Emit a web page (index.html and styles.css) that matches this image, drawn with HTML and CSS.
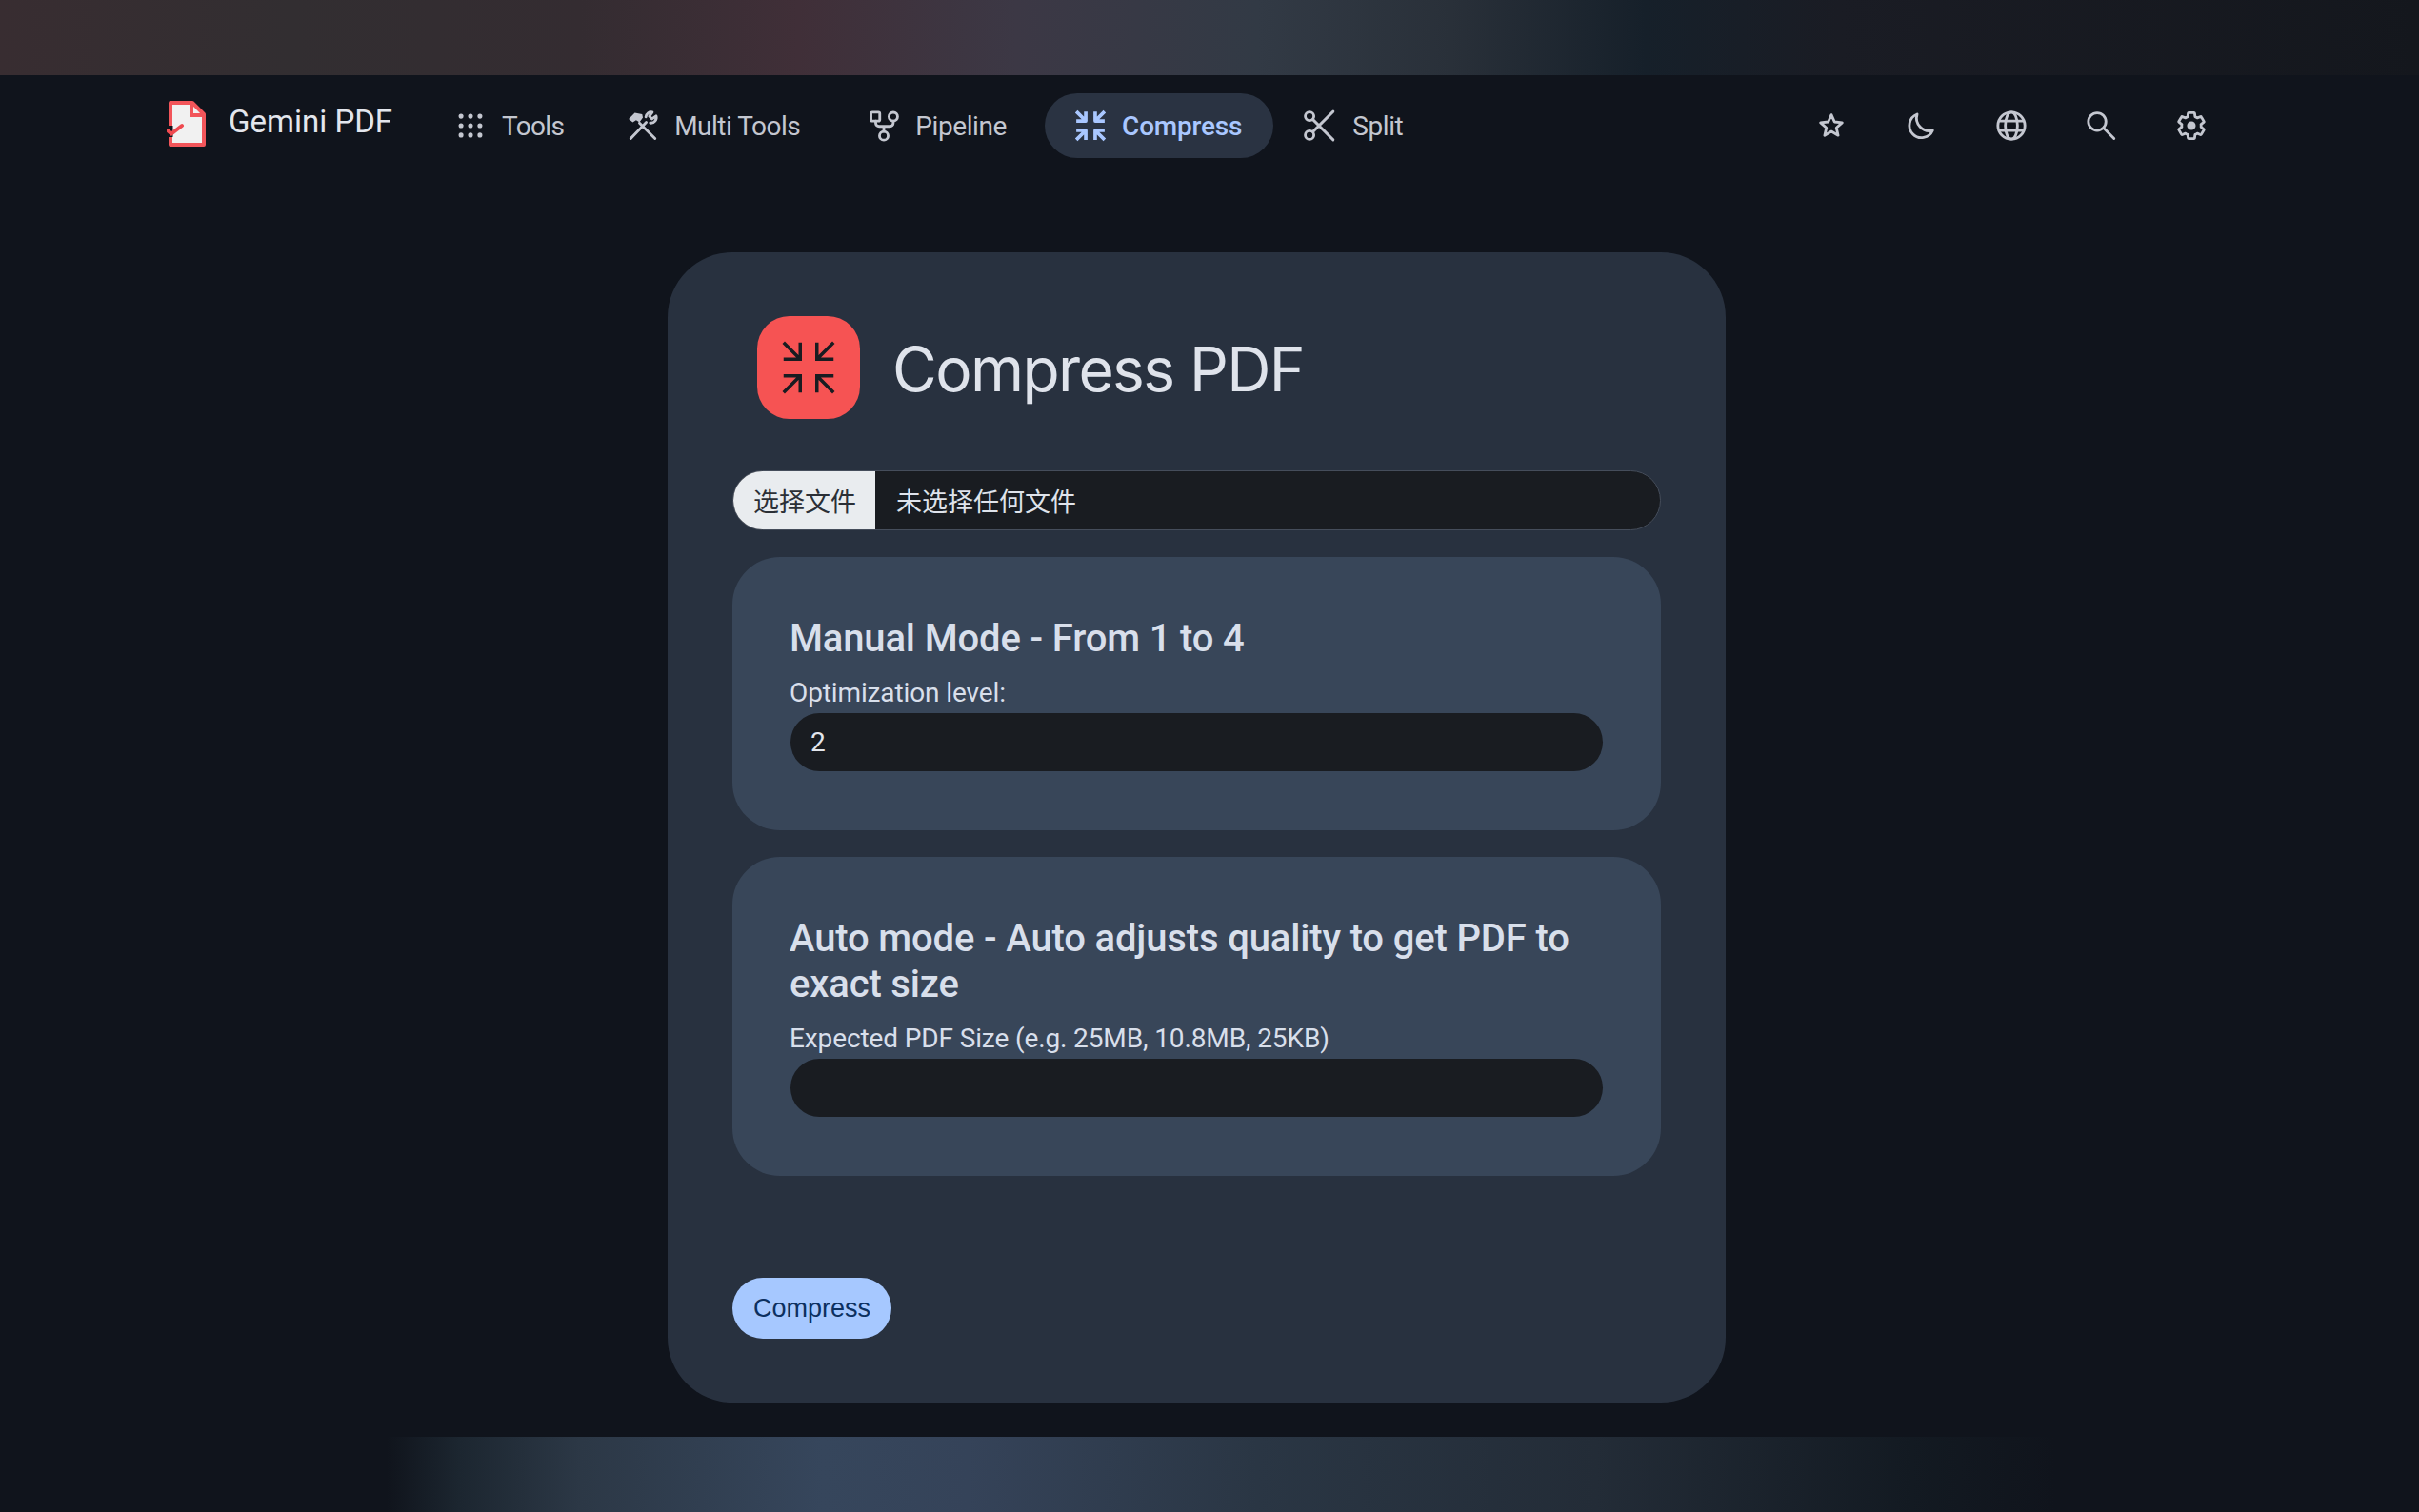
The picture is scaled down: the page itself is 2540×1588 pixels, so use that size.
FILE: index.html
```html
<!DOCTYPE html>
<html lang="en">
<head>
    <meta charset="UTF-8">
    <meta name="viewport" content="width=device-width, initial-scale=1.0">
    <title>Compress PDF</title>
    <link rel="stylesheet" href="styles.css">
</head>
<body>
    <svg class="defs" width="0" height="0" aria-hidden="true">
        <symbol id="arrows-in" viewBox="0 0 24 24">
            <path d="M1.5 1.5L8.5 8.5M1.5 8.5H8.5V1.5M22.5 1.5L15.5 8.5M22.5 8.5H15.5V1.5M1.5 22.5L8.5 15.5M1.5 15.5H8.5V22.5M22.5 22.5L15.5 15.5M22.5 15.5H15.5V22.5"/>
        </symbol>
    </svg>

    <div class="strip strip-top"></div>

    <nav class="navbar">
        <a class="brand" href="#">
            <svg class="brand-icon" viewBox="0 0 42 50">
                <path class="doc" d="M4 3H27L39 15V47H4Z"/>
                <path class="doc-fold" d="M26 4V16H38"/>
                <path class="doc-gap" d="M4 27V39"/>
                <path class="doc-check" d="M1 32L5 35.5L16 27"/>
            </svg>
            <span>Gemini PDF</span>
        </a>
        <ul class="nav-links">
            <li class="nav-item tools">
                <svg class="icon" viewBox="0 0 24 24">
                    <g class="dots"><circle cx="5" cy="5" r="1.8"/><circle cx="12" cy="5" r="1.8"/><circle cx="19" cy="5" r="1.8"/><circle cx="5" cy="12" r="1.8"/><circle cx="12" cy="12" r="1.8"/><circle cx="19" cy="12" r="1.8"/><circle cx="5" cy="19" r="1.8"/><circle cx="12" cy="19" r="1.8"/><circle cx="19" cy="19" r="1.8"/></g>
                </svg>
                <span>Tools</span>
            </li>
            <li class="nav-item multi">
                <svg class="icon" viewBox="0 0 24 24">
                    <path d="M3 21.5L14.5 9.5M14.2 5.5A4 4 0 0 1 19 2L16.8 5L18.8 7L21.8 4.8A4 4 0 0 1 17.5 10"/>
                    <path d="M21 21.5L9.5 10"/>
                    <path class="solid" d="M1.5 7L6 2.5L11.5 3.5L12 6L9.5 9.5L7 8L4.5 9.5Z"/>
                </svg>
                <span>Multi Tools</span>
            </li>
            <li class="nav-item pipeline">
                <svg class="icon" viewBox="0 0 24 24">
                    <rect x="2.5" y="2" width="6.5" height="6.5" rx="1"/>
                    <circle cx="19" cy="5.3" r="3.2"/>
                    <circle cx="12" cy="19.5" r="3.2"/>
                    <path d="M6 8.5V10A2.5 2.5 0 0 0 8.5 12.5H16.5A2.5 2.5 0 0 0 19 10V8.5M12 12.5V16.3"/>
                </svg>
                <span>Pipeline</span>
            </li>
            <li class="nav-item compress active">
                <svg class="icon arrows"><use href="#arrows-in"/></svg>
                <span>Compress</span>
            </li>
            <li class="nav-item split">
                <svg class="icon" viewBox="0 0 24 24">
                    <circle cx="5" cy="5" r="3.2"/>
                    <circle cx="5" cy="19" r="3.2"/>
                    <path d="M7.5 7.5L22.5 22.5M7.5 16.5L22.5 1.5"/>
                </svg>
                <span>Split</span>
            </li>
        </ul>
        <div class="nav-actions">
            <svg class="icon" viewBox="0 0 24 24"><path d="M12 4L14.3 9.2L20 9.8L15.7 13.6L17 19.2L12 16.3L7 19.2L8.3 13.6L4 9.8L9.7 9.2Z"/></svg>
            <svg class="icon" viewBox="0 0 24 24"><path d="M8.5 3.5A9 9 0 1 0 20 15.5A9.5 9.5 0 0 1 8.5 3.5Z"/></svg>
            <svg class="icon" viewBox="0 0 24 24"><circle cx="12" cy="12" r="10"/><ellipse cx="12" cy="12" rx="4.5" ry="10"/><path d="M3 8.5H21M3 15.5H21"/></svg>
            <svg class="icon" viewBox="0 0 24 24"><circle cx="8.5" cy="9" r="6.5"/><path d="M13.5 14L21 21.5"/></svg>
            <svg class="icon" viewBox="0 0 24 24">
                <path d="M19.14 12.94c.04-.3.06-.61.06-.94 0-.32-.02-.64-.07-.94l2.03-1.58c.18-.14.23-.41.12-.61l-1.92-3.32c-.12-.22-.37-.29-.59-.22l-2.39.96c-.5-.38-1.03-.7-1.62-.94l-.36-2.54c-.04-.24-.24-.41-.48-.41h-3.84c-.24 0-.43.17-.47.41l-.36 2.54c-.59.24-1.13.57-1.62.94l-2.39-.96c-.22-.08-.47 0-.59.22L2.74 8.87c-.12.21-.08.47.12.61l2.03 1.58c-.05.3-.09.63-.09.94s.02.64.07.94l-2.03 1.58c-.18.14-.23.41-.12.61l1.92 3.32c.12.22.37.29.59.22l2.39-.96c.5.38 1.03.7 1.62.94l.36 2.54c.05.24.24.41.48.41h3.84c.24 0 .44-.17.47-.41l.36-2.54c.59-.24 1.13-.56 1.62-.94l2.39.96c.22.08.47 0 .59-.22l1.92-3.32c.12-.22.07-.47-.12-.61l-2.01-1.58z"/>
                <circle class="solid" cx="12" cy="12" r="3.2"/>
            </svg>
        </div>
    </nav>

    <main class="content">
        <div class="card">
            <div class="card-header">
                <div class="tool-icon">
                    <svg class="arrows"><use href="#arrows-in"/></svg>
                </div>
                <h1>Compress PDF</h1>
            </div>
            <div class="file-input">
                <span class="file-button">选择文件</span>
                <span class="file-name">未选择任何文件</span>
            </div>
            <section class="mode">
                <h2>Manual Mode - From 1 to 4</h2>
                <label for="level">Optimization level:</label>
                <input id="level" type="text" value="2">
            </section>
            <section class="mode">
                <h2>Auto mode - Auto adjusts quality to get PDF to exact size</h2>
                <label for="size">Expected PDF Size (e.g. 25MB, 10.8MB, 25KB)</label>
                <input id="size" type="text">
            </section>
            <button type="button" class="submit">Compress</button>
        </div>
    </main>

    <div class="strip strip-bottom"></div>
</body>
</html>
```

FILE: styles.css
```css
* {
    box-sizing: border-box;
}
html, body {
    height: 100%;
}
body {
    margin: 0;
    height: 1588px;
    overflow: hidden;
    display: flex;
    flex-direction: column;
    background-color: #10141c;
    color: #dfe3eb;
    font-family: 'Roboto', sans-serif;
}
.defs {
    position: absolute;
}
.strip {
    flex: none;
}
.strip-top {
    height: 79px;
    background: linear-gradient(90deg, #382d31 0%, #322e31 12%, #342c31 24%, #402f38 33%, #3c3845 42%, #323a45 52%, #293039 60%, #16202a 68%, #1a1c24 76%, #14171d 100%);
}
.strip-bottom {
    height: 79px;
    margin-top: 36px;
    background: linear-gradient(90deg, #10141c 16%, #1c2630 19%, #2c3846 24%, #36465c 34%, #354359 40%, #2a3644 52%, #232c37 66%, #131a22 79%, #10141c 85%);
}

/* navbar */
.navbar {
    flex: none;
    height: 106px;
    padding: 0 222px 0 175px;
    display: flex;
    align-items: center;
    color: #c4c7d0;
}
.brand {
    display: flex;
    align-items: center;
    gap: 23px;
    margin-right: 34px;
    margin-top: -4px;
    color: #e3e6ed;
    font-size: 33px;
    text-decoration: none;
}
.brand span {
    margin-bottom: 5px;
}
.brand-icon {
    width: 42px;
    height: 50px;
}
.doc {
    fill: #f1f1f1;
    stroke: #f2555a;
    stroke-width: 4;
    stroke-linejoin: round;
}
.doc-fold {
    fill: none;
    stroke: #f2555a;
    stroke-width: 4;
}
.doc-gap {
    fill: none;
    stroke: #10141c;
    stroke-width: 5;
}
.doc-check {
    fill: none;
    stroke: #ef4a50;
    stroke-width: 4;
    stroke-linecap: round;
}
.nav-links {
    display: flex;
    align-items: center;
    gap: 5px;
    margin: 0;
    padding: 0;
    list-style: none;
    font-size: 28px;
    letter-spacing: -0.4px;
}
.nav-item {
    display: flex;
    align-items: center;
    gap: 16px;
    height: 68px;
    padding: 0 31px;
}
.nav-item.tools {
    letter-spacing: -0.7px;
}
.nav-item.multi {
    margin-left: -1px;
    letter-spacing: -0.5px;
}
.nav-item.compress {
    padding-right: 33px;
    border-radius: 34px;
    letter-spacing: -0.2px;
}
.nav-item.active {
    background-color: #2a3342;
    color: #a9c7ff;
    font-weight: 500;
}
.nav-item.pipeline {
    margin-left: 4px;
    margin-right: 4px;
}
.nav-item.split {
    gap: 18px;
    margin-left: -5px;
}
.icon {
    flex: none;
    width: 34px;
    height: 34px;
    fill: none;
    stroke: currentColor;
    stroke-width: 2;
    stroke-linecap: round;
    stroke-linejoin: round;
}
.icon .dots,
.icon .solid {
    fill: currentColor;
    stroke: none;
}
.arrows {
    fill: none;
    stroke: currentColor;
}
.nav-item .arrows {
    stroke-width: 2.6;
    stroke-linecap: butt;
}
.nav-actions {
    margin-left: auto;
    display: flex;
    align-items: center;
    gap: 60.4px;
}

/* main card */
.content {
    flex: 1;
    padding: 80px 27px 0 0;
    display: flex;
    justify-content: center;
}
.card {
    width: 1111px;
    height: 1208px;
    padding: 67px 68px;
    border-radius: 68px;
    background-color: #28313f;
    display: flex;
    flex-direction: column;
}
.card-header {
    display: flex;
    align-items: center;
    gap: 34px;
    padding-left: 26px;
    margin-bottom: 54px;
}
.tool-icon {
    width: 108px;
    height: 108px;
    border-radius: 34px;
    background-color: #f65353;
    color: #191c21;
    display: flex;
    align-items: center;
    justify-content: center;
}
.tool-icon .arrows {
    width: 60px;
    height: 60px;
    stroke-width: 1.4;
}
h1 {
    margin: 0;
    position: relative;
    top: 1px;
    font-family: 'Inter', sans-serif;
    font-size: 64px;
    font-weight: 400;
    letter-spacing: -1.6px;
    color: #dfe3eb;
}
.file-input {
    display: flex;
    align-items: center;
    height: 63px;
    border: 1px solid #454d5b;
    border-radius: 32px;
    background-color: #191c21;
    overflow: hidden;
    font-family: 'Noto Sans CJK SC', sans-serif;
    font-size: 27px;
}
.file-button {
    height: 100%;
    padding: 0 20px 0 21px;
    display: flex;
    align-items: center;
    background-color: #e9ecef;
    color: #2b2f36;
}
.file-name {
    padding-left: 22px;
    color: #dfe3eb;
}
.mode {
    margin-top: 28px;
    padding: 62px 60px 62px;
    border-radius: 50px;
    background-color: #384659;
}
h2 {
    margin: 0 0 16px;
    font-size: 40px;
    line-height: 48px;
    font-weight: 500;
    letter-spacing: -0.15px;
    color: #d8dfeb;
}
label {
    display: block;
    margin-bottom: 4px;
    font-size: 28px;
    line-height: 34px;
    letter-spacing: -0.12px;
    color: #d8dfeb;
}
input {
    display: block;
    width: calc(100% - 2px);
    height: 61px;
    margin: 0 1px;
    padding: 0 21px;
    border: none;
    border-radius: 31px;
    background-color: #191c21;
    color: #e3e6ed;
    font-family: 'Roboto', sans-serif;
    font-size: 28px;
}
.submit {
    align-self: flex-start;
    margin-top: auto;
    height: 64px;
    padding: 0 22px;
    border: none;
    border-radius: 32px;
    background-color: #a6c8ff;
    color: #0c3060;
    font-family: 'Liberation Sans', sans-serif;
    font-size: 27px;
}
```
